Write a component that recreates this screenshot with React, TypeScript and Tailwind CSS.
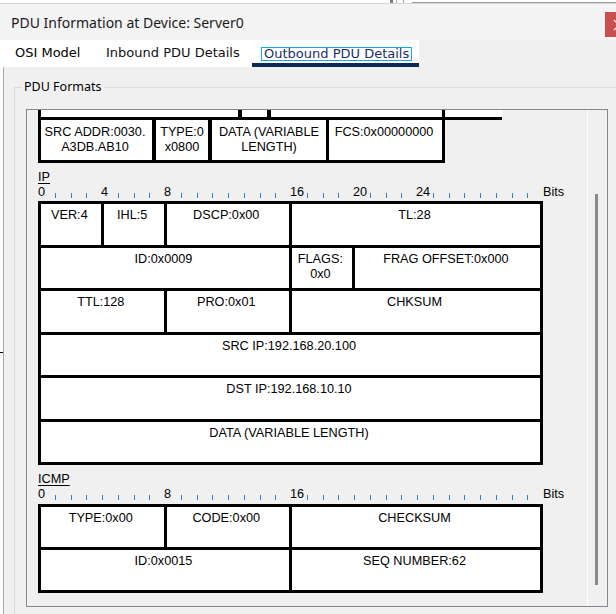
import React from "react";

type Field = { label: string; span: number };

const SPAN: Record<number, string> = {
  4: "col-span-4",
  8: "col-span-8",
  12: "col-span-12",
  16: "col-span-16",
  32: "col-span-32",
};

const ipRows: Field[][] = [
  [
    { label: "VER:4", span: 4 },
    { label: "IHL:5", span: 4 },
    { label: "DSCP:0x00", span: 8 },
    { label: "TL:28", span: 16 },
  ],
  [
    { label: "ID:0x0009", span: 16 },
    { label: "FLAGS:\n0x0", span: 4 },
    { label: "FRAG OFFSET:0x000", span: 12 },
  ],
  [
    { label: "TTL:128", span: 8 },
    { label: "PRO:0x01", span: 8 },
    { label: "CHKSUM", span: 16 },
  ],
  [{ label: "SRC IP:192.168.20.100", span: 32 }],
  [{ label: "DST IP:192.168.10.10", span: 32 }],
  [{ label: "DATA (VARIABLE LENGTH)", span: 32 }],
];

const icmpRows: Field[][] = [
  [
    { label: "TYPE:0x00", span: 8 },
    { label: "CODE:0x00", span: 8 },
    { label: "CHECKSUM", span: 16 },
  ],
  [
    { label: "ID:0x0015", span: 16 },
    { label: "SEQ NUMBER:62", span: 16 },
  ],
];

function Ruler({ labels }: { labels: number[] }) {
  return (
    <div className="grid grid-cols-[repeat(32,15.75px)_auto] h-[15px] items-end">
      {Array.from({ length: 32 }).map((_, b) =>
        labels.includes(b) ? (
          <span key={b} className="self-start whitespace-nowrap">
            {b}
          </span>
        ) : (
          <span key={b} className="ml-px mb-[2px] h-[5px] w-px bg-[#2f7fd6]" />
        )
      )}
      <span className="self-start pl-px">Bits</span>
    </div>
  );
}

function FieldGrid({ rows, rowH }: { rows: Field[][]; rowH: string }) {
  return (
    <div className="grid grid-cols-32 gap-[3px] p-[3px] bg-black w-[505px]">
      {rows.flat().map((f, i) => (
        <div
          key={i}
          className={`${SPAN[f.span]} ${rowH} bg-white text-center pt-[4px] pr-[3px] whitespace-pre-line`}
        >
          {f.label}
        </div>
      ))}
    </div>
  );
}

export default function App() {
  return (
    <div className="w-[616px] h-[614px] overflow-hidden bg-white flex flex-col">
      {/* window behind the dialog */}
      <div className="h-[4px] shrink-0 flex border-b border-[#d6d6d6]">
        <div className="w-[390px] shrink-0" />
        <div className="w-[3px] shrink-0 bg-[#7a7a7a]" />
        <div className="w-[3px] shrink-0" />
        <div className="w-px shrink-0 bg-[#b4b4b4]" />
        <div className="w-[6px] shrink-0" />
        <div className="w-px shrink-0 bg-[#a0a0a0]" />
        <div className="w-[8px] shrink-0" />
        <div className="flex-1 mt-[2px] border-t border-l border-[#9a9a9a] flex">
          <div className="w-[57px] border-r border-[#c8c8c8]" />
          <div className="w-[71px] border-r border-[#c8c8c8]" />
        </div>
      </div>

      {/* title bar */}
      <div className="h-[36px] shrink-0 bg-[#f3f3f3] flex items-center justify-between pl-[11px] font-['Noto_Sans',sans-serif] text-[14px] text-[#1a1a1a]">
        <span>PDU Information at Device: Server0</span>
        <div className="self-start shrink-0 mt-[8px] h-[25px] w-[11px] bg-[#c75050] overflow-hidden">
          <svg width="11" height="25" viewBox="0 0 11 25">
            <path d="M9 8 L19 18 M19 8 L9 18" stroke="#ffffff" strokeWidth="1.2" fill="none" />
          </svg>
        </div>
      </div>

      {/* tabs */}
      <div className="h-[27px] shrink-0 flex bg-[#f0f0f0] font-['DejaVu_Sans',sans-serif] text-[13px] leading-[12px]">
        <div className="w-[419px] shrink-0 bg-white flex items-start">
          <div className="w-[96px] shrink-0 pl-[14px] pt-[7px]">
            <span className="border border-transparent">OSI Model</span>
          </div>
          <div className="w-[156px] shrink-0 pl-[9px] pt-[7px] text-[#111]">
            <span className="border border-transparent">Inbound PDU Details</span>
          </div>
          <div className="w-[167px] shrink-0 h-full pl-[9px] pt-[7px] border-b-[4px] border-[#0e2a4e]">
            <span className="inline-block border border-[#1ba6e2] px-[2px] text-[#172e6c]">
              Outbound PDU Details
            </span>
          </div>
        </div>
      </div>

      {/* body */}
      <div className="flex-1 min-h-0 overflow-hidden flex">
        <div className="w-[3px] shrink-0 bg-white flex flex-col">
          <div className="mt-[285px] h-px bg-black" />
        </div>
        <div className="flex-1 min-w-0 border-l border-[#a7a7a7] bg-[#f0f0f0] pl-[10px]">
          <fieldset className="mt-[12px] w-[620px] border border-[#dcdcdc] pl-[11px] pb-[30px]">
            <legend className="ml-[-4px] px-[2px] font-['Noto_Sans',sans-serif] text-[12.5px] leading-[16px] text-black">
              PDU Formats
            </legend>

            <div className="mt-[14px] w-[582px] h-[498px] border border-[#828790] bg-[#f0f0f0] flex">
              <div className="w-[560px] shrink-0 overflow-hidden pl-[11px] flex flex-col font-['Liberation_Sans',Arial,sans-serif] text-[12.7px] leading-[15px] text-black">
                {/* partially scrolled ethernet rows */}
                <div className="flex w-[464px] bg-black pl-[3px] pb-[3px]">
                  <div className="w-[197px] h-[7px] bg-white" />
                  <div className="ml-[4px] w-[25px] h-[7px] bg-white" />
                  <div className="ml-[4px] w-[171px] h-[7px] bg-white" />
                  <div className="ml-[3px] w-[57px] h-[7px] bg-white" />
                </div>
                <div className="flex w-[407px] bg-black pl-[3px] pr-[3px] pb-[3px]">
                  <div className="w-[111px] h-[40px] bg-white text-center pt-[5px] pr-[3px] whitespace-pre-line">
                    {"SRC ADDR:0030.\nA3DB.AB10"}
                  </div>
                  <div className="ml-[4px] w-[52px] h-[40px] bg-white text-center pt-[5px] whitespace-pre-line">
                    {"TYPE:0\nx0800"}
                  </div>
                  <div className="ml-[4px] w-[114px] h-[40px] bg-white text-center pt-[5px] whitespace-pre-line">
                    {"DATA (VARIABLE\nLENGTH)"}
                  </div>
                  <div className="ml-[3px] w-[113px] h-[40px] bg-white text-center pt-[5px] pr-[3px]">
                    FCS:0x00000000
                  </div>
                </div>

                {/* IP */}
                <div className="mt-[7px] underline underline-offset-[1.5px]">IP</div>
                <Ruler labels={[0, 4, 8, 16, 20, 24]} />
                <div className="mt-[1px]">
                  <FieldGrid rows={ipRows} rowH="h-[40.5px]" />
                </div>

                {/* ICMP */}
                <div className="mt-[7px] underline underline-offset-[1.5px]">ICMP</div>
                <Ruler labels={[0, 8, 16]} />
                <div className="mt-[2px]">
                  <FieldGrid rows={icmpRows} rowH="h-[40px]" />
                </div>
              </div>

              {/* scrollbar */}
              <div className="w-[20px] shrink-0 border-l border-white">
                <div className="ml-[7px] mt-[84px] w-[3px] h-[391px] bg-[#8a8a8a]" />
              </div>
            </div>
          </fieldset>
        </div>
      </div>
    </div>
  );
}
